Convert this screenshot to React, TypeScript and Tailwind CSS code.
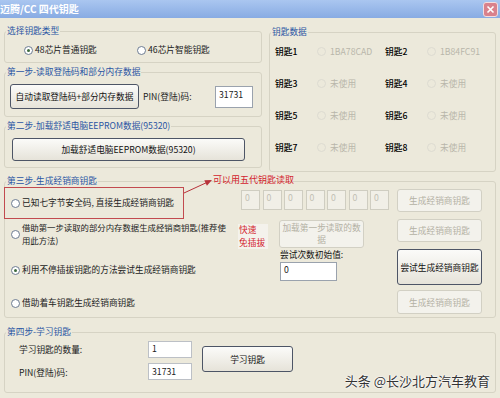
import clsx from "clsx";

const FONT = { fontFamily: '"Noto Sans CJK SC", "Noto Sans", sans-serif' };

const KEYS = [
  ["钥匙1", "1BA78CAD", "钥匙2", "1B84FC91"],
  ["钥匙3", "未使用", "钥匙4", "未使用"],
  ["钥匙5", "未使用", "钥匙6", "未使用"],
  ["钥匙7", "未使用", "钥匙8", "未使用"],
];

function Radio({ checked, disabled }: { checked?: boolean; disabled?: boolean }) {
  return (
    <span
      className={clsx(
        "flex h-[9px] w-[9px] shrink-0 items-center justify-center rounded-full border",
        disabled ? "border-[#dddbd1] bg-transparent" : "border-[#6d7c92] bg-white"
      )}
    >
      {checked && <span className="h-[3px] w-[3px] rounded-full bg-[#3d6a3d]" />}
    </span>
  );
}

function Btn({ children, disabled, className }: { children: React.ReactNode; disabled?: boolean; className?: string }) {
  return (
    <div
      className={clsx(
        "flex flex-col items-center justify-center rounded-[3px] border text-center text-[8.7px] leading-[11px]",
        disabled
          ? "border-[#d2d0c4] bg-[#f3f2ec] text-[#b3b1a4]"
          : "border-[#4d5566] bg-linear-to-b from-[#fbfbf9] to-[#e6e3d9] text-[#111]",
        className
      )}
    >
      {children}
    </div>
  );
}

function Group({ label, className, children }: { label: string; className?: string; children?: React.ReactNode }) {
  return (
    <fieldset className={clsx("rounded-[3px] border border-[#d6d3c4]", className)}>
      <legend className="ml-[1px] px-[1px] text-[8.7px] leading-[12px] text-[#2a55a3]">{label}</legend>
      {children}
    </fieldset>
  );
}

export default function App() {
  return (
    <div className="relative h-[398px] w-[500px] overflow-hidden bg-[#ece9db] text-[8.7px] text-[#222]" style={FONT}>
      {/* title bar */}
      <div className="flex h-[18px] items-center justify-between bg-linear-to-b from-[#aac6f0] to-[#88abe3]">
        <span className="text-[10px] font-bold leading-[12px] text-white">迈腾/CC 四代钥匙</span>
        <div className="mr-[2px] flex h-[15px] w-[15px] items-center justify-center rounded-[3px] border border-[#f3dde0] bg-[#d9818c]">
          <svg width="9" height="9" viewBox="0 0 9 9">
            <path d="M1.5 1.5 L7.5 7.5 M7.5 1.5 L1.5 7.5" stroke="#fff" strokeWidth="1.6" />
          </svg>
        </div>
      </div>

      <div className="px-[4px]">
        {/* top row */}
        <div className="flex items-start pt-[7px]">
          <div className="flex w-[259px] flex-col">
            <Group label="选择钥匙类型" className="h-[38px]">
              <div className="mt-[7px] flex h-[12px] items-center pl-[19px]">
                <div className="flex w-[113px] items-center gap-[2px]">
                  <Radio checked />
                  <span>48芯片普通钥匙</span>
                </div>
                <div className="flex items-center gap-[2px]">
                  <Radio />
                  <span>46芯片智能钥匙</span>
                </div>
              </div>
            </Group>

            <Group label="第一步-读取登陆码和部分内存数据" className="mt-[3px] h-[51px]">
              <div className="mt-[6px] flex h-[25px] items-center pl-[5px]">
                <Btn className="h-[25px] w-[129px]">自动读取登陆码+部分内存数据</Btn>
                <span className="ml-[4px] w-[72px]">PIN(登陆)码:</span>
                <div className="h-[22px] w-[38px] border border-[#9aa2ad] bg-white pl-[3px] pt-[2px] leading-[12px]">
                  31731
                </div>
              </div>
            </Group>

            <Group label="第二步-加载舒适电脑EEPROM数据(95320)" className="mt-[3px] h-[48px]">
              <Btn className="ml-[7px] mt-[6px] h-[23px] w-[233px]">加载舒适电脑EEPROM数据(95320)</Btn>
            </Group>
          </div>

          <Group label="钥匙数据" className="ml-[7px] mt-[1px] h-[146px] w-[225px]">
            <div className="mt-[7px] flex flex-col gap-[18px] pl-[5px]">
              {KEYS.map((row) => (
                <div key={row[0]} className="flex h-[14px] items-center">
                  {[0, 2].map((i) => (
                    <div key={i} className="flex w-[110px] items-center">
                      <span className="w-[42px] font-medium text-black">{row[i]}</span>
                      <Radio disabled />
                      <span className="ml-[4px] text-[#b8b6aa]">{row[i + 1]}</span>
                    </div>
                  ))}
                </div>
              ))}
            </div>
          </Group>
        </div>

        {/* step 3 */}
        <div className="relative mt-[3px]">
          <Group label="第三步-生成经销商钥匙" className="h-[143px] w-[492px]">
            <div className="flex h-[32px]">
              <div className="w-[233px]">
                <div className="-ml-[1px] flex h-[32px] w-[180px] items-center gap-[2px] border border-[#c24a4f] pl-[6px]">
                  <Radio />
                  <span>已知七字节安全码, 直接生成经销商钥匙</span>
                </div>
              </div>
              <div className="flex w-[159px] items-start gap-[2.5px] pl-[3px] pt-[3px]">
                {[0, 1, 2, 3, 4, 5, 6].map((n) => (
                  <div key={n} className="h-[20px] w-[19px] border border-[#cfcdc1] bg-[#f1efe7] pl-[3px] pt-[1px] leading-[11px] text-[#c2c0b4]">
                    0
                  </div>
                ))}
              </div>
              <Btn disabled className="mt-[2px] h-[23px] w-[85px]">生成经销商钥匙</Btn>
            </div>

            <div className="flex h-[30px]">
              <div className="flex w-[233px] items-center gap-[2px] pl-[6px]">
                <Radio />
                <div className="flex flex-col whitespace-nowrap text-[8.4px] leading-[13px]">
                  <span>借助第一步读取的部分内存数据生成经销商钥匙(推荐使</span>
                  <span>用此方法)</span>
                </div>
              </div>
              <div className="flex w-[159px] items-start">
                <div className="mt-[5px] flex h-[25px] w-[30px] flex-col whitespace-nowrap bg-[#f4f2ec] px-[1px] leading-[12.5px] text-[#d3232e]">
                  <span>快速</span>
                  <span>免插拔</span>
                </div>
                <Btn disabled className="ml-[11px] mt-[1px] h-[28px] w-[85px] leading-[12.5px]">
                  <span>加载第一步读取的数</span>
                  <span>据</span>
                </Btn>
              </div>
              <Btn disabled className="h-[23px] w-[85px]">生成经销商钥匙</Btn>
            </div>

            <div className="flex h-[38px]">
              <div className="flex w-[233px] items-center gap-[2px] pl-[6px] pt-[4px]">
                <Radio checked />
                <span>利用不停插拔钥匙的方法尝试生成经销商钥匙</span>
              </div>
              <div className="flex w-[159px] flex-col pl-[42px]">
                <span className="leading-[12px] text-[#111]">尝试次数初始值:</span>
                <div className="mt-[1px] h-[19px] w-[57px] border border-[#9aa2ad] bg-white pl-[3px] pt-[1px] leading-[11px]">0</div>
              </div>
              <Btn className="h-[36px] w-[85px]">尝试生成经销商钥匙</Btn>
            </div>

            <div className="flex h-[29px]">
              <div className="flex w-[392px] items-center gap-[2px] pl-[6px] pt-[3px]">
                <Radio />
                <span>借助着车钥匙生成经销商钥匙</span>
              </div>
              <Btn disabled className="mt-[3px] h-[24px] w-[85px]">生成经销商钥匙</Btn>
            </div>
          </Group>

          {/* annotation */}
          <svg className="absolute left-[178px] top-[1px]" width="34" height="20" viewBox="0 0 34 20">
            <path d="M2 17 L25 6.4" stroke="#b8323a" strokeWidth="1" />
            <polygon points="30,4.1 24.9,9.7 22.3,4.3" fill="#b8323a" />
          </svg>
          <span className="absolute left-[209px] -top-[1px] text-[9px] leading-[12px] text-[#d3232e]">可以用五代钥匙读取</span>
        </div>

        {/* step 4 */}
        <Group label="第四步-学习钥匙" className="mt-[8px] h-[67px] w-[492px]">
          <div className="mt-[3px] flex items-start pl-[14px]">
            <div className="grid grid-cols-[129px_44px] gap-y-[5px]">
              <span className="flex h-[17px] items-center">学习钥匙的数量:</span>
              <div className="h-[17px] border border-[#bcc0c6] bg-white pl-[3px] pt-[1px] leading-[11px]">1</div>
              <span className="flex h-[17px] items-center pt-[3px]">PIN(登陆)码:</span>
              <div className="h-[17px] border border-[#bcc0c6] bg-white pl-[3px] pt-[2px] leading-[11px]">31731</div>
            </div>
            <Btn className="ml-[10px] mt-[5px] h-[26px] w-[91px]">学习钥匙</Btn>
          </div>
        </Group>
      </div>

      {/* watermark */}
      <span className="absolute bottom-[9px] right-[10px] text-[13px] leading-[16px] text-[#333] [text-shadow:0_0_2px_#fff,0_0_2px_#fff,0_0_1px_#fff]">
        头条 @长沙北方汽车教育
      </span>
    </div>
  );
}
